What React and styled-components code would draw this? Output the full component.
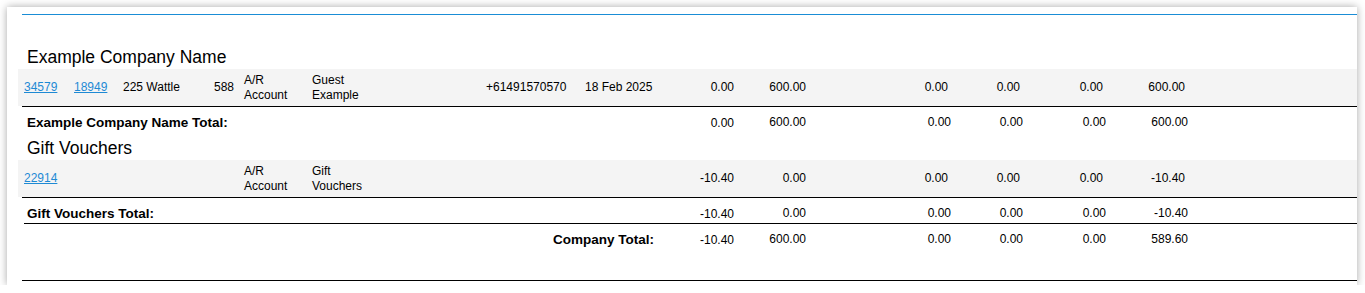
import React from 'react';
import styled, { createGlobalStyle } from 'styled-components';

const GlobalStyle = createGlobalStyle`
  body {
    margin: 0;
    background: #fff;
    font-family: "Liberation Sans", Arial, sans-serif;
    color: #000;
  }
`;

// column widths, measured from the left edge of the grey band
const dataCols = '50px 49px 83px 38px 68px 174px 99px 81px 78px 72px 142px 72px 83px 82px 1fr';
const totalCols = '50px 49px 83px 38px 68px 174px 99px 81px 78px 72px 145px 72px 83px 82px 1fr';

const Card = styled.div`
  box-sizing: border-box;
  width: 1350px;
  height: 278px;
  margin: 7px 8px 0 7px;
  padding-top: 7px;
  background: #fff;
  box-shadow: 0 0 8px rgba(0, 0, 0, 0.35);
  overflow: hidden;
`;

const BlueRule = styled.div`
  height: 1px;
  margin-left: 15px;
  background: #1a8dd6;
`;

const Rule = styled.div`
  height: 1px;
  margin-left: ${p => p.$inset || 15}px;
  background: #000;
`;

const GroupHeading = styled.h2`
  margin: ${p => p.$gap}px 0 0;
  padding: 0 0 1px 20px;
  font-size: 17.5px;
  font-weight: normal;
  line-height: 21px;
`;

const DataRow = styled.div`
  display: grid;
  grid-template-columns: ${dataCols};
  align-items: center;
  height: 37px;
  margin-left: 11px;
  background: #f4f4f4;
  font-size: 12px;
  line-height: 15px;
`;

const TotalRow = styled.div`
  display: grid;
  grid-template-columns: ${totalCols};
  align-items: start;
  box-sizing: border-box;
  height: ${p => p.$height}px;
  margin-left: 11px;
  padding-top: 7px;
  font-size: 12px;
  line-height: 16px;
`;

const Cell = styled.div`
  padding: ${p => p.$drop ? '1px' : '0'} ${p => p.$right ? '4px' : '0'} 0 ${p => p.$right ? '0' : '6px'};
  text-align: ${p => p.$right ? 'right' : 'left'};
  white-space: nowrap;
`;

const TotalLabel = styled.div`
  grid-column: 1 / 9;
  padding: 1px ${p => p.$right ? '6px' : '0'} 0 ${p => p.$right ? '0' : '9px'};
  font-size: 13.5px;
  font-weight: bold;
  text-align: ${p => p.$right ? 'right' : 'left'};
`;

const DocLink = styled.a`
  color: #1e8ad4;
  text-decoration: underline;
  cursor: pointer;
`;

const groups = [
  {
    name: 'Example Company Name',
    gap: 32,
    rows: [
      {
        links: ['34579', '18949'],
        address: '225 Wattle',
        unit: '588',
        account: ['A/R', 'Account'],
        contact: ['Guest', 'Example'],
        phone: '+61491570570',
        date: '18 Feb 2025',
        amounts: ['0.00', '600.00', '0.00', '0.00', '0.00', '600.00'],
      },
    ],
    total: ['0.00', '600.00', '0.00', '0.00', '0.00', '600.00'],
  },
  {
    name: 'Gift Vouchers',
    gap: 6,
    rows: [
      {
        links: ['22914'],
        address: '',
        unit: '',
        account: ['A/R', 'Account'],
        contact: ['Gift', 'Vouchers'],
        phone: '',
        date: '',
        amounts: ['-10.40', '0.00', '0.00', '0.00', '0.00', '-10.40'],
      },
    ],
    total: ['-10.40', '0.00', '0.00', '0.00', '0.00', '-10.40'],
  },
];

const companyTotal = ['-10.40', '600.00', '0.00', '0.00', '0.00', '589.60'];

const Amounts = ({ values, total }) =>
  values.map((v, i) => (
    <Cell key={i} $right $drop={total && i === 0}>{v}</Cell>
  ));

const LedgerRow = ({ row }) => (
  <DataRow>
    <Cell>{row.links[0] && <DocLink>{row.links[0]}</DocLink>}</Cell>
    <Cell>{row.links[1] && <DocLink>{row.links[1]}</DocLink>}</Cell>
    <Cell>{row.address}</Cell>
    <Cell $right>{row.unit}</Cell>
    <Cell>{row.account[0]}<br />{row.account[1]}</Cell>
    <Cell>{row.contact[0]}<br />{row.contact[1]}</Cell>
    <Cell>{row.phone}</Cell>
    <Cell>{row.date}</Cell>
    <Amounts values={row.amounts} />
  </DataRow>
);

const App = () => (
  <>
    <GlobalStyle />
    <Card>
      <BlueRule />
      {groups.map(g => (
        <React.Fragment key={g.name}>
          <GroupHeading $gap={g.gap}>{g.name}</GroupHeading>
          {g.rows.map((r, i) => <LedgerRow key={i} row={r} />)}
          <Rule />
          <TotalRow $height={25}>
            <TotalLabel>{g.name} Total:</TotalLabel>
            <Amounts values={g.total} total />
          </TotalRow>
          {g.name === 'Gift Vouchers' && <Rule $inset={17} />}
        </React.Fragment>
      ))}
      <TotalRow $height={56}>
        <TotalLabel $right>Company Total:</TotalLabel>
        <Amounts values={companyTotal} total />
      </TotalRow>
      <Rule />
    </Card>
  </>
);

export default App;
